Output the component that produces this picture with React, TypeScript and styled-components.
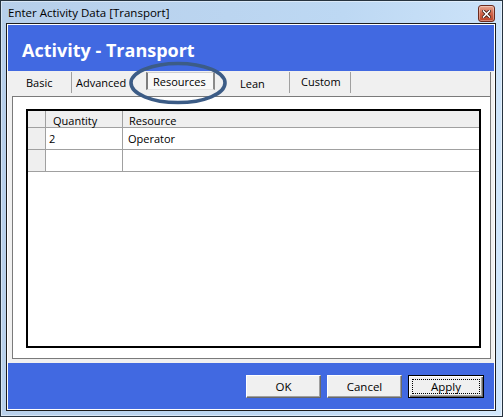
import React from 'react';
import styled, { createGlobalStyle, css } from 'styled-components';

const GlobalStyle = createGlobalStyle`
  html, body {
    margin: 0;
    padding: 0;
    background: #ffffff;
  }
  body {
    font-family: "Open Sans", "Noto Sans", sans-serif;
    overflow: hidden;
  }
`;

const Window = styled.div`
  width: 503px;
  height: 417px;
  box-sizing: border-box;
  border: 1px solid #26333f;
  background: linear-gradient(100deg, #b7cfea 0%, #bdd8f3 60%, #d3e8fc 100%);
  box-shadow: inset 0 0 0 1px rgba(255, 255, 255, 0.45);
  padding: 0 6px 5px 5px;
  display: flex;
  flex-direction: column;
`;

const TitleBar = styled.div`
  height: 22px;
  display: flex;
  align-items: center;
`;

const TitleText = styled.span`
  margin-left: 2px;
  font-size: 11.5px;
  color: #000;
`;

const CloseButton = styled.div`
  margin-left: auto;
  margin-right: 1px;
  align-self: flex-start;
  margin-top: 4px;
  width: 17px;
  height: 17px;
  box-sizing: border-box;
  border: 1px solid #6b2a1e;
  border-radius: 3px;
  background: linear-gradient(#e8a892 0%, #d0664c 50%, #bb4429 100%);
  box-shadow: inset 0 0 0 1px rgba(255, 255, 255, 0.35);
  display: flex;
  align-items: center;
  justify-content: center;
`;

const Client = styled.div`
  flex: 1;
  display: flex;
  flex-direction: column;
  border: 1px solid #1c1c1c;
  background: #ffffff;
  padding: 1px;
`;

const Header = styled.div`
  height: 46px;
  box-sizing: border-box;
  padding: 3px 0 0 14px;
  background: #4169e1;
  display: flex;
  align-items: center;
  color: #ffffff;
  font-size: 18px;
  font-weight: 700;
`;

const Body = styled.div`
  flex: 1;
  background: #f0f0f0;
  padding: 1px 3px 4px 4px;
  display: flex;
`;

const TabControl = styled.div`
  flex: 1;
  display: flex;
  flex-direction: column;
  border-right: 1px solid #7a7a7a;
`;

const TabRow = styled.div`
  position: relative;
  height: 24px;
  display: flex;
  align-items: flex-start;
`;

const Tab = styled.div<{ $w: number; $pl: number; $sep?: boolean; $shift?: number; $selected?: boolean }>`
  width: ${(p) => p.$w}px;
  height: 21px;
  box-sizing: border-box;
  padding-left: ${(p) => p.$pl}px;
  padding-top: ${(p) => Math.max(0, (p.$shift ?? 0) * 2)}px;
  padding-bottom: ${(p) => Math.max(0, -(p.$shift ?? 0) * 2)}px;
  display: flex;
  align-items: center;
  font-size: 11px;
  color: #000;
  border-right: ${(p) => (p.$sep ? '1px solid #a0a0a0' : 'none')};
  ${(p) =>
    p.$selected &&
    css`
      height: 18px;
      padding-top: 1px;
      background: #f8f8f8;
      border-left: 2px solid #7d7d7d;
      border-right: 2px solid #8a8a8a;
      border-top: 1px solid #cfcfcf;
      border-bottom: 1px solid #e4e4e4;
    `}
`;

const Highlight = styled.svg`
  position: absolute;
  left: 116px;
  top: -11px;
  width: 100px;
  height: 44px;
  overflow: visible;
`;

const Panel = styled.div`
  flex: 1;
  background: #ffffff;
  border: 1px solid #7a7a7a;
  border-right: none;
  padding: 12px 9px 10px 13px;
  display: flex;
  flex-direction: column;
`;

const Grid = styled.div`
  flex: 1;
  border: 2px solid #000;
  background: #ffffff;
  display: grid;
  grid-template-columns: 18px 77px 1fr;
  grid-template-rows: 17px 22px 22px;
  align-content: start;
`;

const Cell = styled.div<{ $pl?: number; $head?: boolean; $last?: boolean }>`
  box-sizing: border-box;
  padding-left: ${(p) => p.$pl ?? 0}px;
  padding-top: ${(p) => (p.$head ? 2 : 0)}px;
  display: flex;
  align-items: center;
  font-size: 11px;
  color: #000;
  background: ${(p) => (p.$head ? '#efefef' : '#ffffff')};
  border-bottom: 1px solid #a0a0a0;
  border-right: ${(p) => (p.$last ? 'none' : '1px solid #a0a0a0')};
`;

const Footer = styled.div`
  height: 46px;
  box-sizing: border-box;
  background: #4169e1;
  display: flex;
  justify-content: flex-end;
  align-items: flex-start;
  gap: 6px;
  padding: 12px 10px 0 0;
`;

const Button = styled.button<{ $default?: boolean }>`
  width: ${(p) => (p.$default ? 76 : 75)}px;
  height: 23px;
  box-sizing: border-box;
  padding: 0;
  background: #f0f0f0;
  font-family: "Open Sans", "Noto Sans", sans-serif;
  font-size: 11.5px;
  color: #000;
  border: 1px solid;
  border-color: #ffffff #696969 #696969 #ffffff;
  box-shadow: inset -1px -1px 0 #a0a0a0;
  ${(p) =>
    p.$default &&
    css`
      border: 1px solid #000;
      box-shadow: inset 1px 1px 0 #ffffff, inset -1px -1px 0 #696969, inset -2px -2px 0 #a0a0a0;
      outline: 1px dotted #000;
      outline-offset: -5px;
    `}
`;

const rows = [
  { quantity: '2', resource: 'Operator' },
  { quantity: '', resource: '' },
];

const App: React.FC = () => {
  return (
    <>
      <GlobalStyle />
      <Window>
        <TitleBar>
          <TitleText>Enter Activity Data [Transport]</TitleText>
          <CloseButton>
            <svg width="9" height="8" viewBox="0 0 9 8">
              <path d="M1.5 1 L7.5 7 M7.5 1 L1.5 7" stroke="#3b1a12" strokeWidth="3.2" strokeLinecap="square" />
              <path d="M1.5 1 L7.5 7 M7.5 1 L1.5 7" stroke="#ffffff" strokeWidth="1.6" strokeLinecap="square" />
            </svg>
          </CloseButton>
        </TitleBar>
        <Client>
          <Header>Activity - Transport</Header>
          <Body>
            <TabControl>
              <TabRow>
                <Tab $w={60} $pl={14} $sep>Basic</Tab>
                <Tab $w={74} $pl={4}>Advanced</Tab>
                <Tab $w={69} $pl={5} $selected>Resources</Tab>
                <Tab $w={75} $pl={25} $sep $shift={1}>Lean</Tab>
                <Tab $w={61} $pl={11} $sep $shift={-1}>Custom</Tab>
                <Highlight viewBox="0 0 100 44">
                  <ellipse cx="50" cy="22" rx="47" ry="19.5" fill="none" stroke="#3c5c86" strokeWidth="3.6" />
                </Highlight>
              </TabRow>
              <Panel>
                <Grid>
                  <Cell $head />
                  <Cell $head $pl={7}>Quantity</Cell>
                  <Cell $head $pl={6} $last>Resource</Cell>
                  {rows.map((r, i) => (
                    <React.Fragment key={i}>
                      <Cell $head />
                      <Cell $pl={3}>{r.quantity}</Cell>
                      <Cell $pl={5} $last>{r.resource}</Cell>
                    </React.Fragment>
                  ))}
                </Grid>
              </Panel>
            </TabControl>
          </Body>
          <Footer>
            <Button>OK</Button>
            <Button>Cancel</Button>
            <Button $default>Apply</Button>
          </Footer>
        </Client>
      </Window>
    </>
  );
};

export default App;
